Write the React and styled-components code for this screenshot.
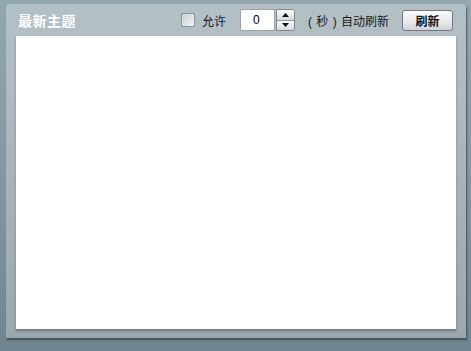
import React from "react";
import styled, { createGlobalStyle } from "styled-components";

const Global = createGlobalStyle`
  html, body { margin: 0; padding: 0; }
  body {
    width: 471px;
    height: 351px;
    overflow: hidden;
    background: linear-gradient(180deg, #93a7b1 0%, #7f949e 60%, #6f858f 100%);
    font-family: "Noto Sans CJK SC", "Liberation Sans", sans-serif;
  }
`;

const Page = styled.div`
  padding: 4px 5px 0 6px;
`;

const Panel = styled.div`
  width: 460px;
  height: 334px;
  box-sizing: border-box;
  border-radius: 4px 4px 0 0;
  background: linear-gradient(180deg, #b3c0c6 0%, #a9b5bb 50%, #9ba8ae 100%);
  box-shadow: 1px 2px 2px rgba(40, 55, 62, 0.7);
  padding: 0 10px 9px 10px;
  display: flex;
  flex-direction: column;
`;

const Header = styled.div`
  height: 32px;
  display: flex;
  align-items: center;
`;

const Title = styled.div`
  color: #fff;
  font-weight: bold;
  font-size: 14px;
  padding-left: 2px;
  flex: 1;
  letter-spacing: 0.5px;
`;

const Check = styled.span`
  width: 12px;
  height: 12px;
  border: 1px solid #8a949a;
  background: linear-gradient(135deg, #c9cfd2 0%, #f4f5f6 100%);
  margin-right: 7px;
`;

const Label = styled.span`
  font-size: 12px;
  color: #1a1a1a;
  white-space: pre;
  margin-right: ${p => p.$gap || 0}px;
`;

const Paren = styled.span`
  font-family: "Liberation Sans", sans-serif;
  font-size: 12px;
  padding: 0 1px;
`;

const Spin = styled.div`
  display: flex;
  align-items: stretch;
  height: 22px;
  margin-right: 12px;
`;

const NumBox = styled.div`
  width: 35px;
  background: #fff;
  border: 1px solid #9aa3a8;
  border-radius: 2px 0 0 2px;
  box-sizing: border-box;
  font-family: "Liberation Sans", sans-serif;
  font-size: 12px;
  display: flex;
  align-items: center;
  justify-content: center;
  padding-right: 2px;
`;

const Arrows = styled.div`
  width: 19px;
  display: flex;
  flex-direction: column;
  border: 1px solid #7f898e;
  border-radius: 0 3px 3px 0;
  box-sizing: border-box;
  overflow: hidden;
  margin-left: 1px;
`;

const Arrow = styled.div`
  flex: 1;
  display: flex;
  align-items: center;
  justify-content: center;
  background: linear-gradient(180deg, #fafafa, #d6dadc);
  & + & { border-top: 1px solid #8f989c; }
`;

const Button = styled.div`
  margin-left: 13px;
  margin-right: 3px;
  width: 51px;
  height: 21px;
  box-sizing: border-box;
  border: 1px solid #717b80;
  border-radius: 3px;
  background: linear-gradient(180deg, #fbfbfb 0%, #e6e8e9 60%, #cfd3d5 100%);
  display: flex;
  align-items: center;
  justify-content: center;
  font-size: 12px;
  font-weight: bold;
  color: #111;
`;

const Body = styled.div`
  flex: 1;
  background: #fff;
  box-shadow: 0 2px 2px rgba(70, 80, 85, 0.55);
`;

export default function App() {
  return (
    <>
      <Global />
      <Page>
        <Panel>
          <Header>
            <Title>最新主题</Title>
            <Check />
            <Label $gap={14}>允许</Label>
            <Spin>
              <NumBox>0</NumBox>
              <Arrows>
                <Arrow>
                  <svg width="7" height="4" viewBox="0 0 7 4"><path d="M0 4L3.5 0L7 4Z" fill="#111" /></svg>
                </Arrow>
                <Arrow>
                  <svg width="7" height="4" viewBox="0 0 7 4"><path d="M0 0L3.5 4L7 0Z" fill="#111" /></svg>
                </Arrow>
              </Arrows>
            </Spin>
            <Label>
              <Paren>( </Paren>秒<Paren> ) </Paren>自动刷新
            </Label>
            <Button>刷新</Button>
          </Header>
          <Body />
        </Panel>
      </Page>
    </>
  );
}
